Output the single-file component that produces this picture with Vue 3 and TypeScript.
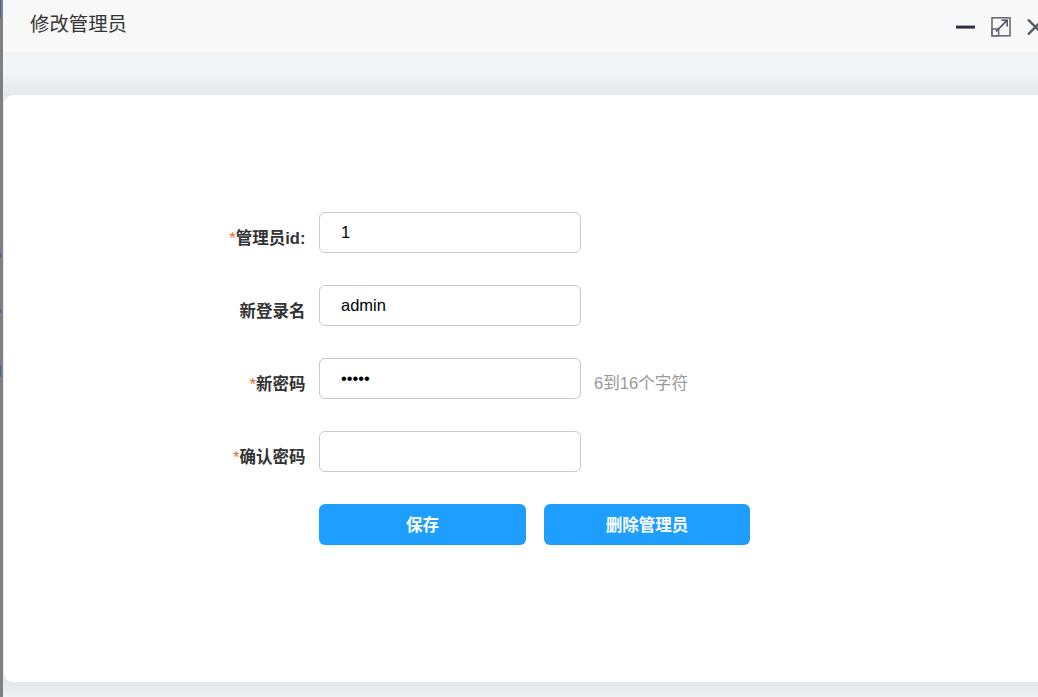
<script setup lang="ts">
interface Row { label: string; required: boolean; value: string; type: string; hint?: string }
const rows: Row[] = [
  { label: '管理员id:', required: true, value: '1', type: 'text' },
  { label: '新登录名', required: false, value: 'admin', type: 'text' },
  { label: '新密码', required: true, value: 'admin', type: 'password', hint: '6到16个字符' },
  { label: '确认密码', required: true, value: '', type: 'password' },
]
</script>

<template>
  <div class="stage">
    <div class="strip">
      <i class="tick tick-a"></i>
      <i class="tick tick-b"></i>
      <i class="tick tick-c"></i>
      <i class="tick tick-d"></i>
    </div>
    <div class="dialog">
      <header class="head">
        <h1 class="title">修改管理员</h1>
        <div class="tools">
          <svg class="ico" width="20" height="20" viewBox="0 0 20 20"><rect x="0" y="8.6" width="19" height="3" fill="#2d2f45" /></svg>
          <svg class="ico" width="20" height="20" viewBox="0 0 20 20" fill="none">
            <rect x="1" y=".8" width="18" height="18" stroke="#6b6d76" stroke-width="1.6" />
            <rect x="1" y="12" width="6.6" height="6.8" stroke="#6b6d76" stroke-width="1.6" />
            <path d="M5 14.5L16 3.4M10.5 3.2H16.2V9.5" stroke="#4a4c5c" stroke-width="1.5" />
          </svg>
          <svg class="ico" width="20" height="20" viewBox="0 0 20 20" fill="none">
            <path d="M2 2.5L17 17.5M17 2.5L2 17.5" stroke="#55575f" stroke-width="2.4" />
          </svg>
        </div>
      </header>
      <main class="body">
        <section class="card">
          <form class="form" @submit.prevent>
            <div v-for="r in rows" :key="r.label" class="row">
              <label class="label"><span v-if="r.required" class="star">*</span>{{ r.label }}</label>
              <input class="field" :type="r.type" :value="r.value" />
              <span v-if="r.hint" class="hint">{{ r.hint }}</span>
            </div>
            <div class="row">
              <span class="label"></span>
              <div class="actions">
                <button class="btn btn-save" type="button">保存</button>
                <button class="btn btn-del" type="button">删除管理员</button>
              </div>
            </div>
          </form>
        </section>
      </main>
    </div>
  </div>
</template>

<style>
html, body { margin: 0; background: #fff; overflow: hidden; }
</style>

<style scoped>
.stage {
  display: flex;
  width: 1038px;
  height: 697px;
  overflow: hidden;
  font-family: "Liberation Sans", "Noto Sans CJK SC", sans-serif;
}
.strip {
  position: relative;
  flex: 0 0 3px;
  background: #808080;
}
.tick {
  position: absolute;
  left: 0;
  width: 1px;
  background: #3f62a8;
}
.tick-a { top: 0; height: 18px; }
.tick-b { top: 253px; height: 5px; }
.tick-c { top: 309px; height: 4px; }
.tick-d { top: 365px; height: 12px; }
.dialog {
  flex: 0 0 1060px;
  display: flex;
  flex-direction: column;
}
.head {
  flex: 0 0 53px;
  display: flex;
  align-items: flex-start;
  justify-content: space-between;
  background: #f8f8f8;
  border-bottom: 1px solid #eeeeee;
  padding-left: 27px;
}
.title {
  margin: 11px 0 0;
  font-size: 19.4px;
  line-height: 27px;
  font-weight: 400;
  color: #333;
}
.tools {
  display: flex;
  gap: 15px;
  margin-top: 17px;
  margin-right: 17px;
}
.ico { display: block; }
.body {
  flex: 1;
  min-height: 0;
  display: flex;
  flex-direction: column;
  padding: 41px 0 15px 1px;
  background: linear-gradient(#f3f6f9 0, #f1f4f7 20px, #e6e9ec 41px, #e6e9ec 630px, #f0f3f6 644px);
}
.card {
  flex: 1;
  background: #fff;
  border-radius: 9px;
  padding-top: 117px;
}
.form {
  display: flex;
  flex-direction: column;
  gap: 32px;
}
.row {
  display: flex;
  align-items: center;
  height: 41px;
}
.label {
  flex: 0 0 301.4px;
  padding-top: 8px;
  box-sizing: border-box;
  text-align: right;
  font-size: 16.5px;
  font-weight: 700;
  color: #333;
}
.star {
  font-weight: 400;
  color: #f0673a;
}
.field {
  box-sizing: border-box;
  width: 262px;
  height: 41px;
  margin-left: 13.6px;
  padding: 0 21px 1px;
  border: 1px solid #c9c9c9;
  border-radius: 6px;
  background: #fff;
  font: 16.5px "Liberation Sans", "Noto Sans CJK SC", sans-serif;
  color: #000;
  outline: none;
}
.hint {
  margin-left: 13px;
  padding-top: 7px;
  font-size: 16.6px;
  color: #999;
}
.actions {
  display: flex;
  gap: 18px;
  margin-left: 13.6px;
}
.btn {
  height: 41px;
  border: 0;
  border-radius: 6px;
  padding: 0 0 2px;
  background: #1e9fff;
  color: #fff;
  font: 700 16.5px "Liberation Sans", "Noto Sans CJK SC", sans-serif;
}
.btn-save { width: 207px; }
.btn-del { width: 206px; }
</style>
